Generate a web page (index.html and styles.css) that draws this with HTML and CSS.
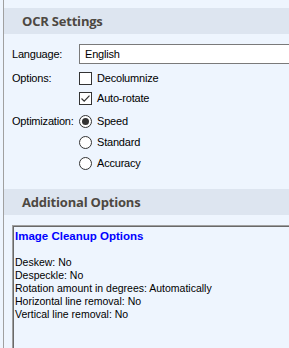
FILE: index.html
```html
<!DOCTYPE html>
<html lang="en">
<head>
  <meta charset="UTF-8" />
  <title>OCR Settings</title>
  <link rel="stylesheet" href="styles.css">
</head>
<body>
  <div class="panel">
    <!-- OCR settings -->
    <div class="section-header">OCR Settings</div>

    <div class="form">
      <div class="row">
        <div class="label">Language:</div>
        <div class="select">English</div>
      </div>

      <div class="row group">
        <div class="label">Options:</div>
        <div class="choices">
          <div class="choice">
            <span class="checkbox"></span>
            <span>Decolumnize</span>
          </div>
          <div class="choice">
            <span class="checkbox checked">
              <svg width="11" height="11" viewBox="0 0 11 11">
                <path d="M1.5 5.5 L4.2 8.2 L9.5 2.6" fill="none" stroke="#333" stroke-width="1.2"/>
              </svg>
            </span>
            <span>Auto-rotate</span>
          </div>
        </div>
      </div>

      <div class="row group radios">
        <div class="label">Optimization:</div>
        <div class="choices">
          <div class="choice radio-row">
            <span class="radio selected"></span>
            <span>Speed</span>
          </div>
          <div class="choice radio-row">
            <span class="radio"></span>
            <span>Standard</span>
          </div>
          <div class="choice radio-row">
            <span class="radio"></span>
            <span>Accuracy</span>
          </div>
        </div>
      </div>
    </div>

    <!-- Additional options -->
    <div class="section-header second">Additional Options</div>

    <div class="info-box">
      <div class="info-title">Image Cleanup Options</div>
      <div class="info-line">&nbsp;</div>
      <div class="info-line">Deskew: No</div>
      <div class="info-line">Despeckle: No</div>
      <div class="info-line">Rotation amount in degrees: Automatically</div>
      <div class="info-line">Horizontal line removal: No</div>
      <div class="info-line">Vertical line removal: No</div>
    </div>
  </div>
</body>
</html>
```

FILE: styles.css
```css
* {
  margin: 0;
  padding: 0;
  box-sizing: border-box;
}

html, body {
  height: 100%;
  background-color: #eef5fe;
  color: #000000;
  font-family: 'Liberation Sans', Arial, sans-serif;
  font-size: 11px;
  letter-spacing: -0.2px;
  overflow: hidden;
}

.panel {
  margin-left: 3px;
  height: 100%;
  display: flex;
  flex-direction: column;
  border-left: 1px solid #a0a0a0;
  padding-top: 8px;
}

.section-header {
  height: 26px;
  line-height: 26px;
  padding-left: 18px;
  background: #dde5f0;
  color: #4d4842;
  font-family: 'Open Sans', sans-serif;
  font-weight: bold;
  font-size: 13px;
  letter-spacing: -0.2px;
}

.section-header.second {
  margin-top: 15px;
}

.form {
  padding: 10px 0 0 8px;
}

.row {
  display: flex;
  align-items: flex-start;
}

.label {
  width: 67px;
  flex-shrink: 0;
  line-height: 20px;
}

.select {
  flex: 1;
  height: 20px;
  line-height: 18px;
  margin-right: -10px;
  padding-left: 5px;
  background: #ffffff;
  border: 1px solid #7a7a7a;
}

.group {
  margin-top: 4px;
}

.choice {
  display: flex;
  align-items: flex-start;
  gap: 5px;
  height: 20px;
  line-height: 20px;
}

.checkbox {
  width: 13px;
  height: 13px;
  margin-top: 4px;
  border: 1px solid #333333;
  background: #ffffff;
  display: flex;
  align-items: center;
  justify-content: center;
}

.radios {
  margin-top: 3px;
}

.radios .label {
  line-height: 21px;
}

.radio-row {
  height: 21px;
  line-height: 21px;
}

.radio {
  width: 13px;
  height: 13px;
  margin-top: 4px;
  border: 1px solid #333333;
  border-radius: 50%;
  background: #ffffff;
  display: flex;
  align-items: center;
  justify-content: center;
}

.radio.selected::after {
  content: '';
  width: 7px;
  height: 7px;
  border-radius: 50%;
  background: #333333;
}

.info-box {
  flex: 1;
  margin: 10px -10px 0 8px;
  padding: 4px 2px;
  border-top: 1px solid #a0a0a0;
  border-left: 1px solid #a0a0a0;
  box-shadow: inset 1px 1px 0 #696969;
  font-size: 10.5px;
  letter-spacing: 0;
  line-height: 13px;
}

.info-title {
  color: #0000ff;
  font-weight: bold;
  font-size: 11.5px;
}
```
